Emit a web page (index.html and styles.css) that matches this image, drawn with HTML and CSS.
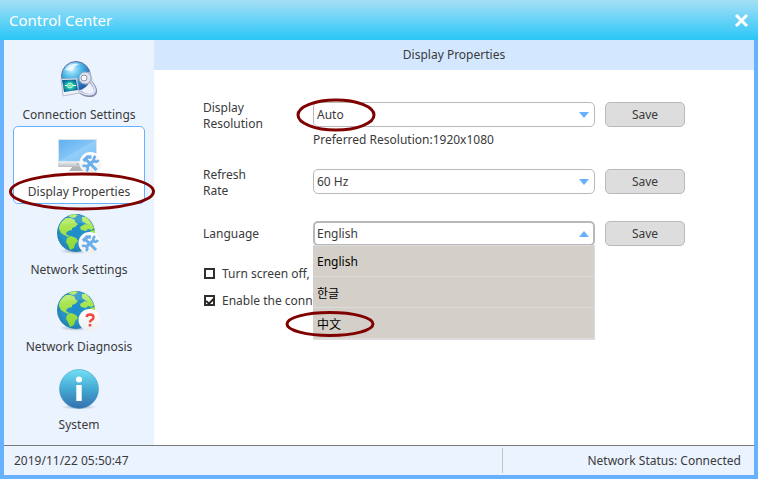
FILE: index.html
```html
<!DOCTYPE html>
<html lang="en">
<head>
<meta charset="utf-8">
<title>Control Center</title>
<link rel="stylesheet" href="styles.css">
</head>
<body>
<svg class="defs" width="0" height="0" aria-hidden="true">
  <defs>
    <radialGradient id="sea" cx=".5" cy=".45" r=".6"><stop offset="0" stop-color="#1c8ccb"/><stop offset=".6" stop-color="#2795c6"/><stop offset="1" stop-color="#2277ae"/></radialGradient>
    <linearGradient id="land" x1="0" y1="0" x2="0" y2="1"><stop offset="0" stop-color="#b8ec66"/><stop offset="1" stop-color="#8cd832"/></linearGradient>
    <linearGradient id="badge" x1="0" y1="0" x2="0" y2="1"><stop offset="0" stop-color="#fff"/><stop offset="1" stop-color="#eceef0"/></linearGradient>
    <linearGradient id="info" x1="0" y1="0" x2="0" y2="1"><stop offset="0" stop-color="#72e0f5"/><stop offset=".5" stop-color="#43a9d3"/><stop offset="1" stop-color="#3470ae"/></linearGradient>
    <linearGradient id="screen" x1="0" y1="0" x2="1" y2="1"><stop offset="0" stop-color="#62b0ef"/><stop offset=".5" stop-color="#82c4f6"/><stop offset=".51" stop-color="#93cef9"/><stop offset="1" stop-color="#7dbff3"/></linearGradient>
    <linearGradient id="metal" x1="0" y1="0" x2="0" y2="1"><stop offset="0" stop-color="#f4f5f6"/><stop offset="1" stop-color="#b8bdc2"/></linearGradient>
    <radialGradient id="dome" cx=".35" cy=".25" r=".8"><stop offset="0" stop-color="#d7f5ff"/><stop offset=".4" stop-color="#4ebbe9"/><stop offset="1" stop-color="#1451a5"/></radialGradient>
    <radialGradient id="photo"><stop offset="0" stop-color="#8ff09a"/><stop offset=".5" stop-color="#23b9a3"/><stop offset="1" stop-color="#07659f"/></radialGradient>
    <radialGradient id="shade"><stop offset="0" stop-color="#8194aa" stop-opacity=".75"/><stop offset="1" stop-color="#8194aa" stop-opacity="0"/></radialGradient>
    <g id="globe">
      <ellipse cx="19" cy="38" rx="17" ry="3" fill="url(#shade)"/>
      <circle cx="19" cy="20" r="19" fill="url(#sea)"/>
      <path fill="url(#land)" d="M2 14Q4 8 9 5L14 5L18 7L18 9L21 11L18 14L15 15L15 17L11 18L9 20L10 22L13 23L11 24L7 22L4 20L2 16ZM10 25L14 23L19 25L21 28L18 31L17 35L13 37L11 32L9 29ZM11 3L17 1L21 2L17 5L13 4ZM25 4L29 4Q34 8 37 15L35 17L31 16L29 18L24 17L23 14L28 11L31 12L28 10L25 8ZM33 18L38 17L38 21L35 22Z"/>
      <path d="M3 12Q10 1 23 2Q32 3 35 12Q20 8 3 12Z" fill="#fff" opacity=".13"/>
    </g>
    <g id="tools" fill="none" stroke="#6aaeea" stroke-width="3">
      <path d="M-4 -3L6 7"/>
      <path d="M-7 -2L-3 -6L1 -6" stroke-width="3.500"/>
      <path d="M-4 4L4 -3"/>
      <path d="M5 -7Q2 -4 4 -2Q6 0 8 -3M-8 3Q-5 2 -3 4Q-2 6 -4 8" stroke-width="2.500"/>
    </g>
  </defs>
</svg>
<div class="window">
  <header class="titlebar">
    <h1 class="title">Control Center</h1>
    <button class="close" type="button" aria-label="Close"><svg width="15" height="15" viewBox="0 0 15 15"><path d="M2 2L13 13M13 2L2 13" stroke="#fff" stroke-width="3"/></svg></button>
  </header>
  <div class="body">
    <nav class="sidebar">
      <a class="item" href="#connection">
        <svg class="icon" viewBox="0 0 44 40" aria-hidden="true">
          <ellipse cx="19" cy="18" rx="14.5" ry="14.5" fill="url(#dome)" stroke="#6870a6"/>
          <path d="M8 12Q13 4 23 6Q18 7 15 13Z" fill="#fff" opacity=".7"/>
          <path d="M34 24Q42 34 36 37Q30 39 23 34" fill="none" stroke="#8289aa" stroke-width="3"/>
          <path d="M34 24Q41 33 36 36Q30 38 23 34" fill="none" stroke="#e0e4f2" stroke-width="1.6"/>
          <path d="M27 15L33 14L35 22L32 26L27 26Z" fill="#d9dfea" stroke="#a2abc2" stroke-width=".7"/>
          <circle cx="28" cy="20" r="6" fill="#dfe4ee" stroke="#9aa5c0"/>
          <circle cx="27" cy="20" r="3" fill="#f6f8fb" stroke="#8c96b3"/>
          <path d="M4 21L20 20L22 35L6 38Z" fill="#edf1f6" stroke="#a0a8bc" stroke-width=".7"/>
          <path d="M5 22L19 21.500L21 32L7 34Z" fill="url(#photo)"/>
          <circle cx="13" cy="27.500" r="2.500" fill="none" stroke="#b8fff0"/><path d="M8 27.500H10M16 27.500H19M13 27V28" stroke="#fff"/>
        </svg>
        <span class="label">Connection Settings</span>
      </a>
      <a class="item current" href="#display" aria-current="page">
        <svg class="icon" viewBox="0 0 44 40" aria-hidden="true">
          <path d="M16 31H26L28 36H12Z" fill="#aeb3b8"/>
          <path d="M1 26H40V31Q40 32 39 32H2Q1 32 1 31Z" fill="url(#metal)"/>
          <path d="M1 4H40V27H1Z" fill="#dce5ed"/>
          <path d="M2 5H39V26H2Z" fill="url(#screen)"/>
          <circle cx="20.500" cy="29" r=".8" fill="#8e959c"/>
          <circle cx="33.500" cy="28" r="11" fill="url(#badge)"/>
          <use href="#tools" x="33.500" y="28"/>
        </svg>
        <span class="label">Display Properties</span>
        <svg class="mark mark-nav" viewBox="0 0 146 39" aria-hidden="true"><ellipse cx="73" cy="19.500" rx="71.500" ry="17.500"/></svg>
      </a>
      <a class="item" href="#network">
        <svg class="icon" viewBox="0 0 44 40" aria-hidden="true">
          <use href="#globe"/><circle cx="32.500" cy="30" r="11" fill="url(#badge)"/><use href="#tools" x="33" y="30"/>
        </svg>
        <span class="label">Network Settings</span>
      </a>
      <a class="item" href="#diagnosis">
        <svg class="icon" viewBox="0 0 44 40" aria-hidden="true">
          <use href="#globe"/><circle cx="32.500" cy="30" r="11" fill="url(#badge)"/>
          <path d="M29.500 27Q30 24.500 33 24.500Q36.500 24.500 36.500 27.500Q36.500 29 34.500 30Q33 31 33 32.500" fill="none" stroke="#f2483d" stroke-width="2.400"/><path d="M31.700 34H34.300V36.500H31.700Z" fill="#f2483d"/>
        </svg>
        <span class="label">Network Diagnosis</span>
      </a>
      <a class="item" href="#system">
        <svg class="icon" viewBox="0 0 44 40" aria-hidden="true">
          <ellipse cx="22" cy="39" rx="18" ry="2.500" fill="url(#shade)"/>
          <circle cx="22" cy="21" r="19.500" fill="url(#info)" stroke="#3a91bd" stroke-width=".5"/>
          <circle cx="22" cy="11.500" r="3" fill="#fff"/><path d="M19.300 17H24.700V33H19.300Z" fill="#fff"/>
        </svg>
        <span class="label">System</span>
      </a>
    </nav>
    <main class="main">
      <h2 class="heading">Display Properties</h2>
      <form class="form">
        <div class="row">
          <label class="name" for="resolution">Display<br>Resolution</label>
          <div class="field">
            <select class="select" id="resolution"><option>Auto</option></select>
            <svg class="mark mark-auto" viewBox="0 0 80 34" aria-hidden="true"><ellipse cx="40" cy="17" rx="38" ry="15"/></svg>
          </div>
          <button class="save" type="button">Save</button>
        </div>
        <p class="hint">Preferred Resolution:1920x1080</p>
        <div class="row">
          <label class="name" for="rate">Refresh<br>Rate</label>
          <div class="field"><select class="select" id="rate"><option>60 Hz</option></select></div>
          <button class="save" type="button">Save</button>
        </div>
        <div class="row language">
          <label class="name" for="language">Language</label>
          <div class="field open">
            <select class="select" id="language"><option>English</option><option>한글</option><option>中文</option></select>
            <ul class="menu" role="listbox" aria-label="Language">
              <li class="choice" role="option" aria-selected="true">English</li>
              <li class="choice cjk" role="option" lang="ko">한글</li>
              <li class="choice cjk" role="option" lang="zh">中文<svg class="mark mark-choice" viewBox="0 0 90 28" aria-hidden="true"><ellipse cx="45" cy="14" rx="43" ry="11.500"/></svg></li>
            </ul>
          </div>
          <button class="save" type="button">Save</button>
        </div>
        <div class="checks">
          <label class="check"><input class="box" type="checkbox">Turn screen off,</label>
          <label class="check"><input class="box" type="checkbox" checked>Enable the conn</label>
        </div>
      </form>
    </main>
  </div>
  <footer class="status">
    <time class="clock">2019/11/22 05:50:47</time>
    <span class="network">Network Status: Connected</span>
  </footer>
</div>
</body>
</html>
```
FILE: styles.css
```css
* { box-sizing: border-box; }
body {
  margin: 0;
  color: #3a3a3a;
  font: 12px/16px "Noto Sans", "Noto Sans CJK SC", sans-serif;
}
.defs { position: absolute; }
.window {
  display: flex;
  flex-direction: column;
  min-height: 100vh;
  padding: 0 4px 4px;
  background: #66b2ff;
}
.titlebar {
  display: flex;
  align-items: center;
  justify-content: space-between;
  height: 40px;
  margin: 0 -4px;
  padding: 0 9px;
  background: linear-gradient(#a6dff6, #29c6f7);
}
.title { margin: 0; color: #fff; font-size: 15px; font-weight: 400; }
.close { display: flex; padding: 0; border: 0; background: none; }
.body { display: flex; flex: 1; }
.sidebar {
  display: flex;
  flex-direction: column;
  width: 150px;
  padding: 9px;
  background: #ebf3ff;
}
.item {
  position: relative;
  display: flex;
  flex: 1;
  flex-direction: column;
  align-items: center;
  gap: 8px;
  padding-top: 8px;
  border: 1px solid transparent;
  border-radius: 5px;
  color: inherit;
  text-decoration: none;
  white-space: nowrap;
}
.current { border-color: #66b2ff; background: #fff; }
.icon { width: 44px; height: 40px; overflow: visible; }
.label { line-height: 18px; }
.main { flex: 1; background: #fff; }
.heading {
  margin: 0;
  background: #d3e8ff;
  font-size: 12px;
  font-weight: 400;
  line-height: 30px;
  text-align: center;
}
.form { padding: 27px 69px 0 49px; }
.row { display: flex; align-items: center; }
.name { width: 110px; padding-top: 3px; }
.field { position: relative; flex: 1; margin-right: 10px; }
.field::after {
  position: absolute;
  top: 10px;
  right: 6px;
  border: solid transparent;
  border-width: 6px 5px 0;
  border-top-color: #66b2ff;
  content: "";
}
.open::after { border-width: 0 5px 6px; border-bottom-color: #66b2ff; }
.select {
  display: block;
  width: 100%;
  height: 25px;
  padding: 0 3px;
  border: 1px solid #b9b9b9;
  border-radius: 5px;
  appearance: none;
  background: #fff;
  color: inherit;
  font: inherit;
}
.open .select { padding: 0 2px; border-width: 2px; }
.save {
  width: 80px;
  height: 25px;
  padding: 0;
  border: 1px solid #b9b9b9;
  border-radius: 5px;
  background: #ddd;
  color: inherit;
  font: inherit;
}
.hint { margin: 0 0 16px 110px; }
.language { margin-top: 22px; }
.language .name { padding-top: 0; }
.menu {
  position: absolute;
  z-index: 1;
  top: 24px;
  left: 0;
  width: 100%;
  margin: 0;
  padding: 0;
  border: solid #dcdcdc;
  border-width: 1px 1px 1px 0;
  background: #d4cfc8;
  color: #000;
  list-style: none;
}
.choice {
  position: relative;
  padding: 2px 0 0 4px;
  border-bottom: 1px solid #dcdcdc;
  line-height: 28px;
}
.cjk { padding-top: 4px; line-height: 26px; }
.checks { margin-top: 14px; }
.check { display: flex; align-items: center; gap: 7px; height: 27px; }
.box {
  display: grid;
  place-items: center;
  width: 11px;
  height: 11px;
  margin: 0 0 0 1px;
  border: 2px solid #2f2f2f;
  appearance: none;
}
.box:checked::after {
  width: 6px;
  height: 3px;
  border: solid #222;
  border-width: 0 0 2px 2px;
  content: "";
  transform: rotate(-45deg);
}
.status {
  display: flex;
  align-items: center;
  justify-content: space-between;
  height: 30px;
  padding: 2px 0 2px 10px;
  border-top: 1px solid #7a7a7a;
  background: #ebf3ff;
}
.network {
  width: 252px;
  padding-right: 13px;
  border-left: 1px solid #c4c4c4;
  line-height: 25px;
  text-align: right;
}
.mark {
  position: absolute;
  z-index: 2;
  fill: none;
  stroke: #800000;
  stroke-width: 3px;
  pointer-events: none;
}
.mark-nav { top: 45px; left: -5px; width: 146px; height: 39px; }
.mark-auto { top: -4px; left: -17px; width: 80px; height: 34px; }
.mark-choice { top: 2px; left: -28px; width: 90px; height: 28px; }
```
